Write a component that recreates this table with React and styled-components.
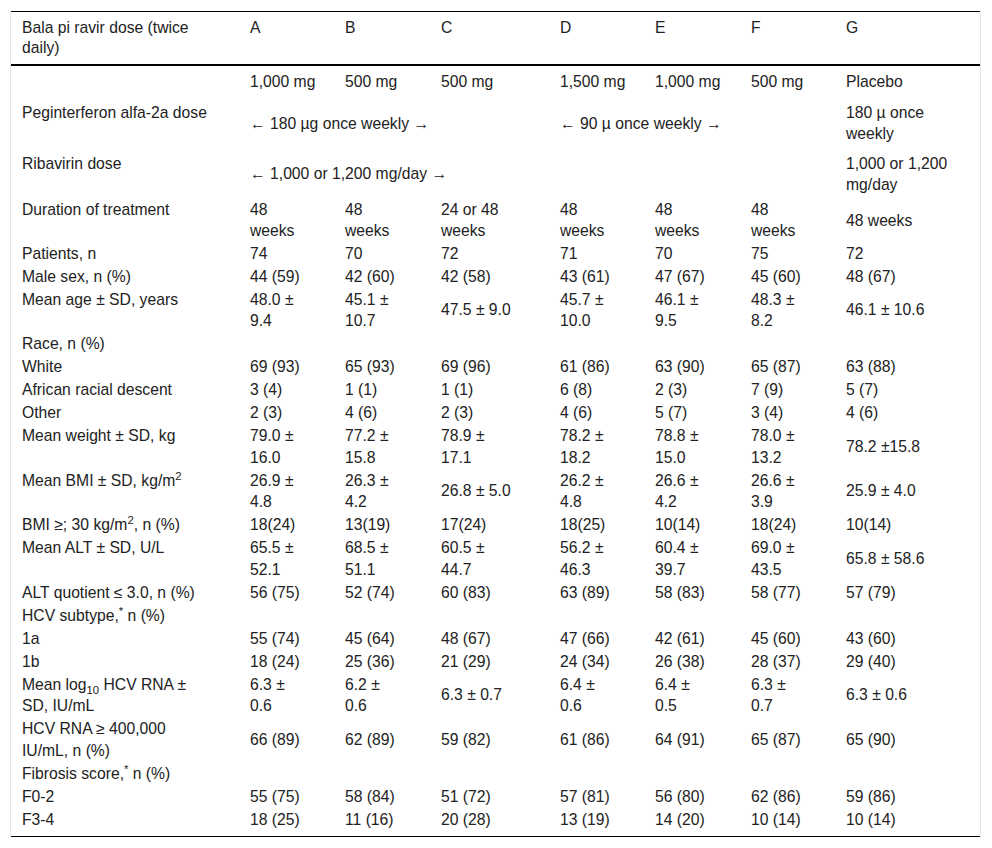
import React from "react";
import styled, { createGlobalStyle } from "styled-components";

const GlobalStyle = createGlobalStyle`
  html, body {
    margin: 0;
    padding: 0;
    background: #ffffff;
  }
  body {
    font-family: "Liberation Sans", Arial, Helvetica, sans-serif;
    font-size: 15.7px;
    color: #222222;
  }
`;

const Frame = styled.div`
  margin: 11px 11px 0 10px;
  border-left: 1px solid #e4e4e4;
  border-right: 1px solid #e4e4e4;
`;

const DataTable = styled.table`
  width: 100%;
  table-layout: fixed;
  border-collapse: separate;
  border-spacing: 0;
  border-top: 1px solid #000000;
  border-bottom: 1px solid #000000;
  line-height: 21.5px;

  sup,
  sub {
    line-height: 0;
    font-size: 0.72em;
  }
`;

const HeadCell = styled.th`
  font-weight: normal;
  text-align: left;
  vertical-align: top;
  line-height: 20px;
  padding: 5.5px ${(p) => p.$pr}px 6px ${(p) => p.$pl}px;
  border-bottom: 2px solid #000000;
`;

const Row = styled.tr`
  & > td {
    padding-top: ${(p) => p.$pt}px;
    padding-bottom: ${(p) => p.$pb}px;
  }
`;

const LabelCell = styled.td`
  vertical-align: top;
  text-align: left;
  padding-left: 11px;
  padding-right: 26px;
`;

const ValueCell = styled.td`
  vertical-align: middle;
  text-align: left;
  padding-left: 12px;
  padding-right: ${(p) => p.$pr}px;
  white-space: ${(p) => (p.$nowrap ? "nowrap" : "normal")};
`;

const columns = [
  { width: 227, pl: 11, pr: 26 },
  { width: 95, pl: 12, pr: 26 },
  { width: 96, pl: 12, pr: 26 },
  { width: 119, pl: 12, pr: 33 },
  { width: 95, pl: 12, pr: 26 },
  { width: 96, pl: 12, pr: 26 },
  { width: 95, pl: 12, pr: 26 },
  { width: 146, pl: 12, pr: 26 },
];

const header = [
  "Bala pi ravir dose (twice daily)",
  "A",
  "B",
  "C",
  "D",
  "E",
  "F",
  "G",
];

const kgm2 = (
  <>
    kg/m<sup>2</sup>
  </>
);

const rows = [
  {
    label: "",
    pt: 5.75,
    pb: 0.75,
    nowrap: true,
    cells: ["1,000 mg", "500 mg", "500 mg", "1,500 mg", "1,000 mg", "500 mg", "Placebo"],
  },
  {
    label: "Peginterferon alfa-2a dose",
    pt: 8.25,
    pb: 0.5,
    cells: [
      { text: "← 180 µg once weekly →", span: 3 },
      { text: "← 90 µ once weekly →", span: 3 },
      "180 µ once weekly",
    ],
  },
  {
    label: "Ribavirin dose",
    pt: 7.25,
    pb: 2.5,
    cells: [
      { text: "← 1,000 or 1,200 mg/day →", span: 6 },
      "1,000 or 1,200 mg/day",
    ],
  },
  {
    label: "Duration of treatment",
    pt: 0.75,
    pb: 0,
    cells: ["48 weeks", "48 weeks", "24 or 48 weeks", "48 weeks", "48 weeks", "48 weeks", "48 weeks"],
  },
  { label: "Patients, n", cells: ["74", "70", "72", "71", "70", "75", "72"] },
  {
    label: "Male sex, n (%)",
    cells: ["44 (59)", "42 (60)", "42 (58)", "43 (61)", "47 (67)", "45 (60)", "48 (67)"],
  },
  {
    label: "Mean age ± SD, years",
    cells: [
      "48.0 ± 9.4",
      "45.1 ± 10.7",
      "47.5 ± 9.0",
      "45.7 ± 10.0",
      "46.1 ± 9.5",
      "48.3 ± 8.2",
      "46.1 ± 10.6",
    ],
  },
  { label: "Race, n (%)", cells: [] },
  {
    label: "White",
    cells: ["69 (93)", "65 (93)", "69 (96)", "61 (86)", "63 (90)", "65 (87)", "63 (88)"],
  },
  {
    label: "African racial descent",
    cells: ["3 (4)", "1 (1)", "1 (1)", "6 (8)", "2 (3)", "7 (9)", "5 (7)"],
  },
  {
    label: "Other",
    cells: ["2 (3)", "4 (6)", "2 (3)", "4 (6)", "5 (7)", "3 (4)", "4 (6)"],
  },
  {
    label: "Mean weight ± SD, kg",
    cells: [
      "79.0 ± 16.0",
      "77.2 ± 15.8",
      "78.9 ± 17.1",
      "78.2 ± 18.2",
      "78.8 ± 15.0",
      "78.0 ± 13.2",
      "78.2 ±15.8",
    ],
  },
  {
    label: <>Mean BMI ± SD, {kgm2}</>,
    cells: [
      "26.9 ± 4.8",
      "26.3 ± 4.2",
      "26.8 ± 5.0",
      "26.2 ± 4.8",
      "26.6 ± 4.2",
      "26.6 ± 3.9",
      "25.9 ± 4.0",
    ],
  },
  {
    label: <>BMI ≥; 30 {kgm2}, n (%)</>,
    cells: ["18(24)", "13(19)", "17(24)", "18(25)", "10(14)", "18(24)", "10(14)"],
  },
  {
    label: "Mean ALT ± SD, U/L",
    cells: [
      "65.5 ± 52.1",
      "68.5 ± 51.1",
      "60.5 ± 44.7",
      "56.2 ± 46.3",
      "60.4 ± 39.7",
      "69.0 ± 43.5",
      "65.8 ± 58.6",
    ],
  },
  {
    label: "ALT quotient ≤ 3.0, n (%)",
    cells: ["56 (75)", "52 (74)", "60 (83)", "63 (89)", "58 (83)", "58 (77)", "57 (79)"],
  },
  {
    label: (
      <>
        HCV subtype,<sup>*</sup> n (%)
      </>
    ),
    cells: [],
  },
  {
    label: "1a",
    cells: ["55 (74)", "45 (64)", "48 (67)", "47 (66)", "42 (61)", "45 (60)", "43 (60)"],
  },
  {
    label: "1b",
    cells: ["18 (24)", "25 (36)", "21 (29)", "24 (34)", "26 (38)", "28 (37)", "29 (40)"],
  },
  {
    label: (
      <>
        Mean log<sub>10</sub> HCV RNA ± SD, IU/mL
      </>
    ),
    cells: [
      "6.3 ± 0.6",
      "6.2 ± 0.6",
      "6.3 ± 0.7",
      "6.4 ± 0.6",
      "6.4 ± 0.5",
      "6.3 ± 0.7",
      "6.3 ± 0.6",
    ],
  },
  {
    label: "HCV RNA ≥ 400,000 IU/mL, n (%)",
    cells: ["66 (89)", "62 (89)", "59 (82)", "61 (86)", "64 (91)", "65 (87)", "65 (90)"],
  },
  {
    label: (
      <>
        Fibrosis score,<sup>*</sup> n (%)
      </>
    ),
    cells: [],
  },
  {
    label: "F0-2",
    cells: ["55 (75)", "58 (84)", "51 (72)", "57 (81)", "56 (80)", "62 (86)", "59 (86)"],
  },
  {
    label: "F3-4",
    pb: 5.75,
    cells: ["18 (25)", "11 (16)", "20 (28)", "13 (19)", "14 (20)", "10 (14)", "10 (14)"],
  },
];

function renderCells(row) {
  const cells = row.cells.length ? row.cells : Array(7).fill("");
  let col = 1;
  return cells.map((c, i) => {
    const cell = typeof c === "object" && c !== null && c.text !== undefined ? c : { text: c, span: 1 };
    const lastCol = col + cell.span - 1;
    const pr = columns[lastCol].pr;
    col += cell.span;
    return (
      <ValueCell key={i} colSpan={cell.span} $pr={pr} $nowrap={row.nowrap}>
        {cell.text}
      </ValueCell>
    );
  });
}

export default function App() {
  return (
    <>
      <GlobalStyle />
      <Frame>
        <DataTable>
          <colgroup>
            {columns.map((c, i) => (
              <col key={i} style={{ width: c.width }} />
            ))}
          </colgroup>
          <thead>
            <tr>
              {header.map((h, i) => (
                <HeadCell key={i} $pl={columns[i].pl} $pr={columns[i].pr}>
                  {h}
                </HeadCell>
              ))}
            </tr>
          </thead>
          <tbody>
            {rows.map((row, i) => (
              <Row key={i} $pt={row.pt ?? 0.75} $pb={row.pb ?? 0.75}>
                <LabelCell>{row.label}</LabelCell>
                {renderCells(row)}
              </Row>
            ))}
          </tbody>
        </DataTable>
      </Frame>
    </>
  );
}
